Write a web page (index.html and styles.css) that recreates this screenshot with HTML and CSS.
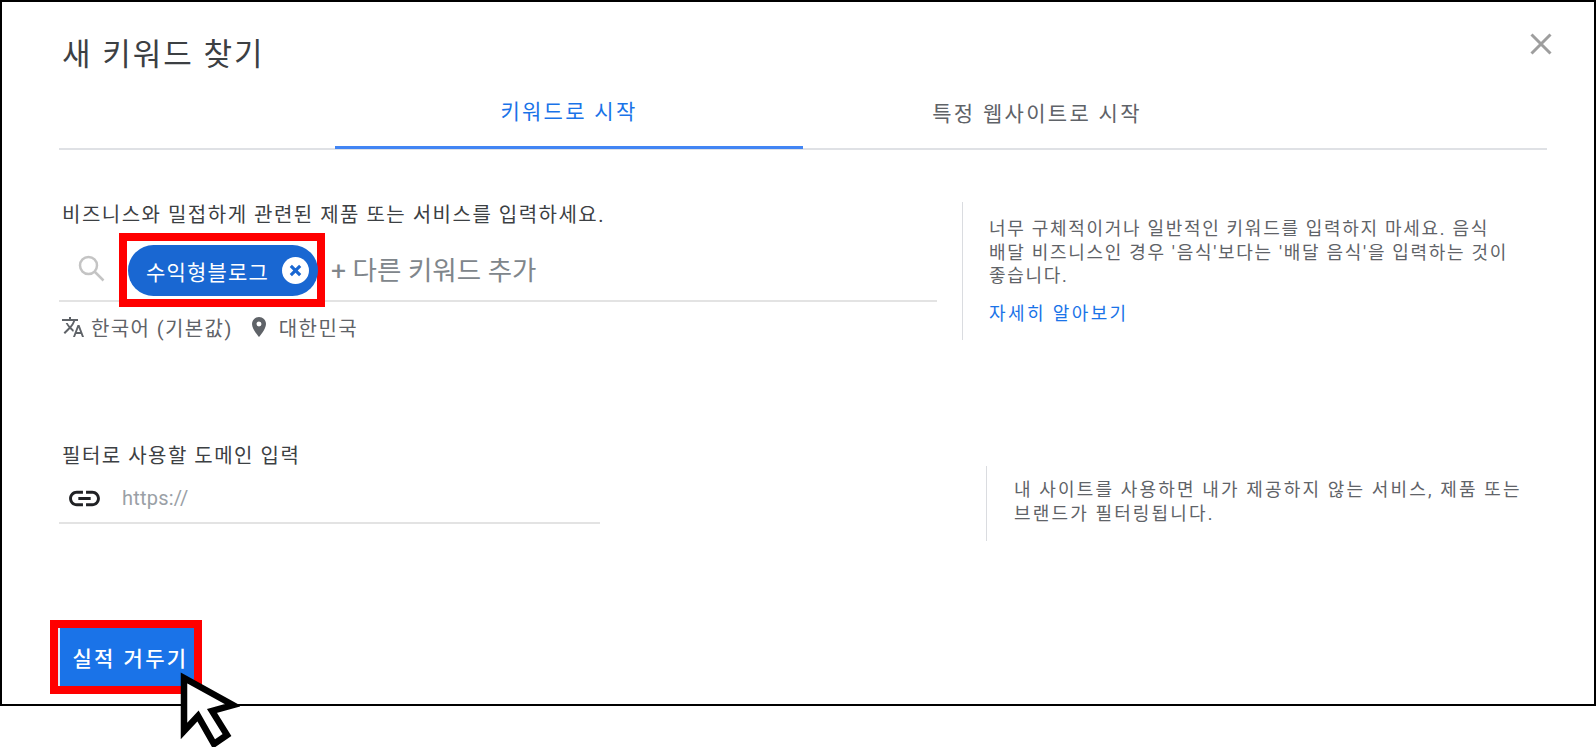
FILE: index.html
```html
<!DOCTYPE html>
<html lang="ko">
<head>
    <meta charset="UTF-8">
    <title>새 키워드 찾기</title>
    <link rel="stylesheet" href="styles.css">
</head>
<body>
    <div class="dialog">
        <div class="dialog-head">
            <h1>새 키워드 찾기</h1>
            <svg class="close-icon" viewBox="0 0 22 22"><path d="M1.5 1.5L20.5 20.5M20.5 1.5L1.5 20.5"/></svg>
        </div>

        <div class="tabs">
            <div class="tab active">키워드로 시작</div>
            <div class="tab">특정 웹사이트로 시작</div>
        </div>

        <div class="section section-keyword">
            <div class="section-main">
                <p class="label">비즈니스와 밀접하게 관련된 제품 또는 서비스를 입력하세요.</p>
                <div class="keyword-input">
                    <svg class="search-icon" viewBox="0 0 28 28"><circle cx="11.5" cy="11.5" r="8.5"/><path d="M18 18L26.5 26.5"/></svg>
                    <div class="highlight highlight-chip">
                        <div class="chip">
                            <span>수익형블로그</span>
                            <svg viewBox="0 0 26 26"><circle cx="13" cy="13" r="13"/><path d="M8.5 8.5L17.5 17.5M17.5 8.5L8.5 17.5"/></svg>
                        </div>
                    </div>
                    <span class="add-keyword">+ 다른 키워드 추가</span>
                </div>
                <div class="locale">
                    <svg viewBox="0 0 24 24"><path d="M12.87 15.07l-2.54-2.51.03-.03c1.74-1.94 2.98-4.17 3.71-6.53H17V4h-7V2H8v2H1v1.99h11.17C11.5 7.92 10.44 9.75 9 11.35 8.07 10.32 7.3 9.19 6.69 8h-2c.73 1.63 1.73 3.17 2.98 4.56l-5.09 5.02L4 19l5-5 3.11 3.11.76-2.04zM18.5 10h-2L12 22h2l1.12-3h4.75L21 22h2l-4.5-12zm-2.62 7l1.62-4.33L19.12 17h-3.24z"/></svg>
                    <span>한국어 (기본값)</span>
                    <svg class="pin" viewBox="0 0 24 24"><path d="M12 2C8.13 2 5 5.13 5 9c0 5.25 7 13 7 13s7-7.75 7-13c0-3.87-3.13-7-7-7zm0 9.5a2.5 2.5 0 0 1 0-5 2.5 2.5 0 0 1 0 5z"/></svg>
                    <span>대한민국</span>
                </div>
            </div>
            <div class="section-help">
                <p>너무 구체적이거나 일반적인 키워드를 입력하지 마세요. 음식<br>배달 비즈니스인 경우 '음식'보다는 '배달 음식'을 입력하는 것이<br>좋습니다.</p>
                <a class="learn-more">자세히 알아보기</a>
            </div>
        </div>

        <div class="section section-domain">
            <div class="domain-main">
                <p class="label">필터로 사용할 도메인 입력</p>
                <div class="domain-input">
                    <svg viewBox="0 0 24 24"><path d="M3.9 12c0-1.71 1.39-3.1 3.1-3.1h4V7H7c-2.76 0-5 2.24-5 5s2.24 5 5 5h4v-1.9H7c-1.71 0-3.1-1.39-3.1-3.1zM8 13h8v-2H8v2zm9-6h-4v1.9h4c1.71 0 3.1 1.39 3.1 3.1s-1.39 3.1-3.1 3.1h-4V17h4c2.76 0 5-2.24 5-5s-2.24-5-5-5z"/></svg>
                    <span>https://</span>
                </div>
            </div>
            <div class="domain-help">
                <p>내 사이트를 사용하면 내가 제공하지 않는 서비스, 제품 또는<br>브랜드가 필터링됩니다.</p>
            </div>
        </div>

        <div class="highlight highlight-button">
            <button class="submit">실적 거두기</button>
        </div>
    </div>

    <svg class="cursor" viewBox="0 0 64 79"><path d="M8 10L8 63L22 48L38 76L51 67L36 43L57 37Z"/></svg>
</body>
</html>
```

FILE: styles.css
```css
* {
    margin: 0;
    padding: 0;
    box-sizing: border-box;
}

body {
    font-family: Roboto, "Noto Sans CJK KR", sans-serif;
    width: 1596px;
    height: 747px;
    overflow: hidden;
    background-color: #fff;
    position: relative;
}

.dialog {
    width: 1596px;
    height: 706px;
    border: 2px solid #000;
    padding: 0 47px 0 57px;
    background-color: #fff;
}

.dialog-head {
    display: flex;
    justify-content: space-between;
    align-items: flex-start;
    height: 72px;
    padding-left: 3px;
}

.dialog-head h1 {
    margin-top: 27px;
    font-size: 31px;
    font-weight: 400;
    letter-spacing: 2px;
    color: #3c4043;
}

.close-icon {
    width: 22px;
    height: 22px;
    margin-top: 31px;
    margin-right: -5px;
    flex-shrink: 0;
}

.close-icon path {
    stroke: #9e9e9e;
    stroke-width: 3;
    fill: none;
}

.tabs {
    display: flex;
    height: 76px;
    border-bottom: 2px solid #dfe1e5;
    padding-left: 276px;
}

.tab {
    width: 468px;
    height: 75px;
    display: flex;
    justify-content: center;
    align-items: center;
    font-size: 21px;
    letter-spacing: 2.3px;
    color: #5f6368;
}

.tab.active {
    color: #1a73e8;
    border-bottom: 3px solid #4285f4;
}

.section {
    display: flex;
}

.section-keyword {
    height: 196px;
    padding-top: 50px;
}

.section-main {
    width: 878px;
    margin-top: 2px;
}

.label {
    font-size: 20px;
    letter-spacing: 1.5px;
    line-height: 26px;
    color: #3c4043;
    padding-left: 3px;
}

.keyword-input {
    display: flex;
    align-items: center;
    height: 74px;
    border-bottom: 2px solid #e3e3e3;
    position: relative;
    padding-left: 18px;
}

.search-icon {
    width: 28px;
    height: 28px;
    margin-top: 8px;
    flex-shrink: 0;
}

.search-icon circle,
.search-icon path {
    fill: none;
    stroke: #c4c4c4;
    stroke-width: 2.5;
}

.highlight {
    border: 8px solid #f00;
    background-color: #fff;
}

.highlight-chip {
    position: absolute;
    left: 60px;
    top: 5px;
    width: 206px;
    height: 74px;
    padding: 4px 0 0 1px;
}

.chip {
    display: flex;
    align-items: center;
    justify-content: space-between;
    width: 190px;
    height: 51px;
    padding: 0 9px 0 18px;
    border-radius: 26px;
    background-color: #1967d2;
    color: #fff;
    font-size: 21px;
    letter-spacing: 1.2px;
}

.chip svg {
    width: 27px;
    height: 27px;
}

.chip circle {
    fill: #fff;
}

.chip path {
    stroke: #1967d2;
    stroke-width: 3;
}

.add-keyword {
    margin-left: 226px;
    margin-top: 8px;
    font-size: 26.5px;
    color: #80868b;
}

.locale {
    display: flex;
    align-items: center;
    height: 50px;
    font-size: 20px;
    letter-spacing: 1.4px;
    color: #5f6368;
    padding-left: 2px;
}

.locale svg {
    width: 24px;
    height: 24px;
    fill: #5f6368;
    margin-right: 6px;
}

.locale .pin {
    margin-left: 14px;
    margin-right: 8px;
}

.section-help {
    margin-left: 25px;
    margin-top: 2px;
    border-left: 1px solid #dadce0;
    padding: 15px 0 0 26px;
    height: 138px;
    font-size: 18px;
    letter-spacing: 1.7px;
    line-height: 23.5px;
    color: #5f6368;
}

.learn-more {
    display: block;
    margin-top: 14px;
    letter-spacing: 2.4px;
    color: #1a73e8;
}

.section-domain {
    height: 180px;
}

.domain-main {
    width: 541px;
    margin-top: 97px;
}

.domain-input {
    display: flex;
    align-items: center;
    height: 55px;
    padding: 5px 0 0 7px;
    border-bottom: 2px solid #e3e3e3;
    font-size: 20px;
    letter-spacing: 0.2px;
    color: #9aa0a6;
}

.domain-input svg {
    width: 37px;
    height: 37px;
    margin-right: 19px;
    fill: #202124;
}

.domain-help {
    margin: 120px 0 0 386px;
    border-left: 1px solid #dadce0;
    padding: 12px 0 0 27px;
    height: 75px;
    font-size: 18px;
    letter-spacing: 2.15px;
    line-height: 24px;
    color: #5f6368;
}

.highlight-button {
    position: absolute;
    left: 50px;
    top: 620px;
    width: 152px;
    height: 74px;
}

.submit {
    display: block;
    width: 136px;
    height: 58px;
    border: none;
    border-left: 2px solid #dfe9f7;
    padding-left: 7px;
    background-color: #1a73e8;
    color: #fff;
    font-family: inherit;
    font-size: 21px;
    letter-spacing: 2.4px;
    font-weight: 500;
}

.cursor {
    position: absolute;
    left: 176px;
    top: 668px;
    width: 64px;
    height: 79px;
}

.cursor path {
    fill: #fff;
    stroke: #000;
    stroke-width: 6.5;
    stroke-linejoin: miter;
}
```
